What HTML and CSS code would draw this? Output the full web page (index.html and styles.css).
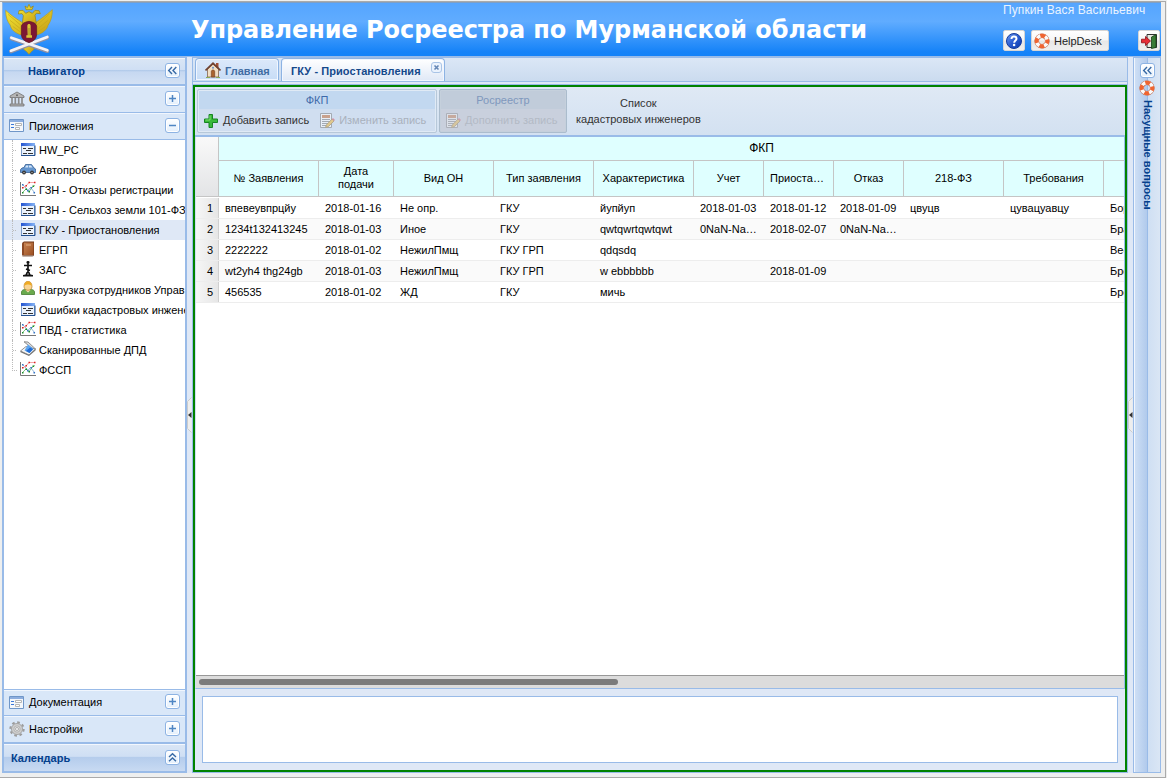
FILE: index.html
```html
<!DOCTYPE html>
<html lang="ru">
<head>
<meta charset="utf-8">
<title>Управление Росреестра по Мурманской области</title>
<link rel="stylesheet" href="styles.css">
</head>
<body>
<svg class="defs" width="0" height="0">
  <defs>
    <linearGradient id="gBlue" x1="0" y1="0" x2="1" y2="1"><stop offset="0" stop-color="#6f9cf0"/><stop offset=".5" stop-color="#2a5cd0"/><stop offset="1" stop-color="#0a37a8"/></linearGradient>
    <linearGradient id="gBar" x1="0" y1="0" x2="1" y2="0"><stop offset="0" stop-color="#2253d0"/><stop offset="1" stop-color="#86b4f5"/></linearGradient>
    <linearGradient id="gGold" x1="0" y1="0" x2="1" y2="1"><stop offset="0" stop-color="#f5e936"/><stop offset="1" stop-color="#c49a12"/></linearGradient>
    <linearGradient id="gBrown" x1="0" y1="0" x2="1" y2="1"><stop offset="0" stop-color="#c98350"/><stop offset="1" stop-color="#9a4e22"/></linearGradient>
  </defs>
  <symbol id="form" viewBox="0 0 16 16"><path d="M1.500 2.500h13v12h-13z" fill="#eaf2fc" stroke="#7d9cc8"/><path d="M1 2h14v3H1z" fill="url(#gBar)"/><path d="M1 14.500h14v-10" fill="none" stroke="#24508f"/><path d="M3 7.500h3M8 7.500h5M6 9.500h5M3 12.500h4M8 12.500h5" stroke="#333"/></symbol>
  <symbol id="formwide" viewBox="0 0 16 16"><path d="M.5 1.500h14v12H.5z" fill="#f4f7fb" stroke="#6f96c8"/><path d="M1 2h13v2H1z" fill="#8eaede"/><path d="M2 6.500h3M2 9.500h3" stroke="#3b78d8"/><path d="M6.500 5.500h6v2h-6zM6.500 9.500h4v2h-4z" fill="#fff" stroke="#b5b5b5"/></symbol>
  <symbol id="bank" viewBox="0 0 16 16"><path d="M8 1 1 5v1.500h14V5zM1 13h14v2H1z" fill="#b5b5b5" stroke="#707070" stroke-width=".8"/><path d="M3 7v6M6.300 7v6M9.700 7v6M13 7v6" stroke="#8b8b8b" stroke-width="1.700"/><circle cx="8" cy="4.300" r="1" fill="#666"/></symbol>
  <symbol id="gear" viewBox="0 0 16 16"><circle cx="8" cy="8" r="6.600" fill="none" stroke="#9c9c9c" stroke-width="2.200" stroke-dasharray="2.600 2.580"/><circle cx="8" cy="8" r="5.500" fill="#cfcfcf" stroke="#a4a4a4"/><circle cx="8" cy="8" r="3.200" fill="#ddd" stroke="#b4b4b4"/><circle cx="8" cy="8" r="1.500" fill="#f7f7f7" stroke="#888" stroke-width=".6"/></symbol>
  <symbol id="car" viewBox="0 0 16 16"><path d="M.5 8.500 2 7l2-.5L5.500 3.500h6L14 7l1.500 1v3.500H.5z" fill="#6596cf" stroke="#365f94" stroke-width=".8"/><path d="m5 6.500 1.200-2h2v2zM9 4.500h2l1.500 2H9z" fill="#d5e6f8"/><circle cx="4" cy="11.500" r="1.900" fill="#333"/><circle cx="12" cy="11.500" r="1.900" fill="#333"/><circle cx="4" cy="11.500" r=".7" fill="#bbb"/><circle cx="12" cy="11.500" r=".7" fill="#bbb"/></symbol>
  <symbol id="chart" viewBox="0 0 16 16"><path d="M.5 1v13.500H16" fill="none" stroke="#777"/><path d="M2.500 3.500 5 6l3 3.500 2.500-3L15 12" fill="none" stroke="#8db4dc"/><path d="M2.500 11.500 6 8l3 2.500 4-5 2-1" fill="none" stroke="#7cc47c"/><path d="M2.500 7 6 5l3-3.500h6" fill="none" stroke="#f3a5a5"/><path d="M2 6h1.500v1.500H2zM5.500 4h1.500v1.500H5.500zM8.500.8H10v1.500H8.500zM14 .8h1.500v1.500H14z" fill="#dc2626"/><path d="M2 11h1.500v1.500H2zM5.500 7.500h1.500V9H5.500zM8.500 10H10v1.500H8.500zM12.500 4.500H14V6h-1.500z" fill="#198c29"/><path d="M2 3h1.500v1.500H2zM7 9h1.500v1.500H7zM10.500 6H12v1.500h-1.500zM13.500 11H15v1.500h-1.500z" fill="#3674c4"/></symbol>
  <symbol id="book" viewBox="0 0 16 16"><path d="M2.500 1.500 4 .5h10v14l-1.500 1h-10z" fill="#6e3516"/><path d="M4 1.500h9.500V14H4z" fill="url(#gBrown)"/><path d="M2 2.500 4 1v13.500H2z" fill="#8c4a25"/><path d="M6 4h5" stroke="#e4b083"/><path d="M2 15h11.500" stroke="#ddd" stroke-width=".8"/></symbol>
  <symbol id="cross" viewBox="0 0 16 16"><path d="M8 0v13M6.500 1.300h3M4 4.500h8M6 8l4 1.500" fill="none" stroke="#111" stroke-width="1.700"/><path d="M3 15.500h10v-1.500l-2.500-.5L9.500 11h-3L5.500 13.500 3 14z" fill="#111"/><path d="M7 12.500h2v1H7z" fill="#aaa"/></symbol>
  <symbol id="user" viewBox="0 0 16 16"><path d="M1.500 11c0-2 3-3 6.500-3s6.500 1 6.500 3v2.500h-13z" fill="#6aaa4d" stroke="#467c32" stroke-width=".8"/><path d="m5.500 9 2.500 2.500L10.500 9" fill="#f8dfb7"/><path d="M4 5.500c0-7 8-7 8 0C12 10.500 4 10.500 4 5.500" fill="#f9d491" stroke="#b77a24" stroke-width=".7"/><path d="M4.200 5c0-6 7.600-6 7.600 0-2-2-5.600-2-7.600 0" fill="#f0ab23"/></symbol>
  <symbol id="scan" viewBox="0 0 16 16"><path d="M4 .8 8 1l7.500 7-1.500 1z" fill="#ddd" stroke="#777" stroke-width=".8"/><path d="M.5 10 6 5.500 15.500 8 9 14z" fill="#f4f4f4" stroke="#777" stroke-width=".8"/><path d="M4.500 9.500 8 3.500 13.500 8 9.500 12z" fill="#5da5f0"/><path d="M6 10l4-3.500 3 1.800L9.500 12z" fill="#1f6bd6"/><path d="M.5 10v1.200L9 15v-1.300zM9 15l6.500-5.500V8L9 13.700z" fill="#777"/></symbol>
  <symbol id="home" viewBox="0 0 16 16"><path d="M11 1h2.500v5H11z" fill="#a55034"/><path d="M2.500 7 8 2l5.500 5v8h-11z" fill="#f2dfc4" stroke="#795338" stroke-width=".7"/><path d="M.5 8.500 8 1.300l7.500 7.200" fill="none" stroke="#704231" stroke-width="1.700"/><path d="M6.300 15V9.500c0-2 3.400-2 3.400 0V15z" fill="#aa642f" stroke="#704021" stroke-width=".6"/><circle cx="8" cy="5.700" r="1" fill="#628cc4"/><path d="M1 15.500h4M11 15.500h4" stroke="#8aaa57"/></symbol>
  <symbol id="plus" viewBox="0 0 16 16"><path d="M6 1.500h3.500V6h5v3.500h-5v5H6v-5H1.500V6H6z" fill="#38b93b" stroke="#168423"/><path d="M7 2.500v4.500H2.500" fill="none" stroke="#82e070"/></symbol>
  <symbol id="edit" viewBox="0 0 16 16"><path d="M1.500.5h11v14h-11z" fill="#fff" stroke="#777"/><path d="M3 2h8v3H3z" fill="#c2662c"/><path d="M3 6.500h8M3 8.500h8M3 10.500h6M3 12.500h5" stroke="#777"/><path d="m6.500 14.500.8-2.500L13 6l2 2-5.700 5.700z" fill="#f0b52e" stroke="#8a641f" stroke-width=".8"/><path d="m13 6 1-1 2 2-1 1z" fill="#d74760"/></symbol>
  <symbol id="ring" viewBox="0 0 16 16"><circle cx="8" cy="8" r="5.300" fill="none" stroke="#b75635" stroke-width="4.600"/><circle cx="8" cy="8" r="5.300" fill="none" stroke="#fafafa" stroke-width="3.800"/><circle cx="8" cy="8" r="5.300" fill="none" stroke="#ef6532" stroke-width="4" stroke-dasharray="4.900 3.425" stroke-dashoffset="2.400"/></symbol>
  <symbol id="help" viewBox="0 0 16 16"><circle cx="8" cy="8" r="7.500" fill="url(#gBlue)" stroke="#153b9c"/><path d="M5.500 6c0-3.500 5-3 5-.3 0 1.800-2.300 1.800-2.300 4" fill="none" stroke="#fff" stroke-width="2"/><circle cx="8.100" cy="12" r="1.300" fill="#fff"/></symbol>
  <symbol id="exit" viewBox="0 0 16 16"><path d="M6 1.500h9.500v13H6z" fill="#e9e9df" stroke="#333"/><path d="m10.500 4 4.500-2.500v13l-4.500 1z" fill="#397c36" stroke="#163e16" stroke-width=".8"/><path d="M.5 6.200h4V3.500L9.500 8l-5 4.500V9.800h-4z" fill="#e72d35" stroke="#900d13" stroke-width=".8"/></symbol>
  <symbol id="tPlus" viewBox="0 0 13 13"><path d="M6.500 3v7M3 6.500h7" stroke="#4f86c4" stroke-width="1.500"/></symbol>
  <symbol id="tMinus" viewBox="0 0 13 13"><path d="M3 6.500h7" stroke="#4f86c4" stroke-width="1.500"/></symbol>
  <symbol id="tLeft" viewBox="0 0 13 13"><path d="M6 3 2.700 6.500 6 10M10.300 3 7 6.500l3.300 3.500" fill="none" stroke="#386aa5" stroke-width="1.400"/></symbol>
  <symbol id="tUp" viewBox="0 0 13 13"><path d="m3 6 3.500-3.300L10 6M3 10.300 6.500 7l3.500 3.300" fill="none" stroke="#386aa5" stroke-width="1.400"/></symbol>
</svg>

<div class="window">
  <header class="header">
    <svg class="emblem" viewBox="9 9 156 159">
      <path d="M70 70C52 58 32 46 17 31c0 20 5 34 14 45 2 12 13 22 30 28l14-3zM103 70c18-12 35-24 54-41 0 20-4 34-13 47-3 13-14 22-31 28l-14-3z" fill="url(#gGold)" stroke="#b89c18" stroke-width="2"/>
      <path d="m24 43 39 33M30 61l31 25M38 79l22 16M149 41l-38 34M144 61l-30 25M136 80l-22 15" stroke="#c4a41a" stroke-width="2"/>
      <path d="M78 29 75 18l7 5 5-10 5 10 8-5-4 11zM55 42l2-10 12-1 8 9 10-5 10 5 8-9 12 1 4 9-12-1-4 6 4 24H67l3-23-4-6z" fill="url(#gGold)" stroke="#97800d" stroke-width="2"/>
      <path d="m76 126 11-10 12 10 3 22-7 6-8 9-8-9-8-6z" fill="url(#gGold)" stroke="#b5930d" stroke-width="2"/>
      <path d="m34 115 108 38M142 113 33 154" stroke="#8f91a5" stroke-width="12" stroke-linecap="round"/>
      <path d="m34 113 108 38M142 111 33 152" stroke="#f3f3f7" stroke-width="8" stroke-linecap="round"/>
      <path d="M64 78q3-11 23-14 20 3 23 14v27q-2 17-23 23-21-6-23-23z" fill="#7c1733" stroke="#5f1625" stroke-width="2"/>
      <path d="M82 78c0-8 10-8 10 0v28h4v7H79v-7h4z" fill="#dac638"/><path d="M87 84v22" stroke="#8a6d13" stroke-width="2"/>
    </svg>
    <h1 class="title">Управление Росреестра по Мурманской области</h1>
    <div class="account">
      <div class="username">Пупкин Вася Васильевич</div>
      <div class="buttons">
        <button class="btn btn-icon"><svg><use href="#help"/></svg></button>
        <button class="btn btn-help"><svg><use href="#ring"/></svg><span>HelpDesk</span></button>
        <button class="btn btn-icon btn-exit"><svg><use href="#exit"/></svg></button>
      </div>
    </div>
  </header>

  <div class="body">
    <nav class="nav">
      <div class="nav-head"><span>Навигатор</span><svg class="tool"><use href="#tLeft"/></svg></div>
      <div class="section"><svg class="ico"><use href="#bank"/></svg><span>Основное</span><svg class="tool"><use href="#tPlus"/></svg></div>
      <div class="section open"><svg class="ico"><use href="#formwide"/></svg><span>Приложения</span><svg class="tool"><use href="#tMinus"/></svg></div>
      <ul class="tree">
        <li><svg class="ico"><use href="#form"/></svg>HW_PC</li>
        <li><svg class="ico"><use href="#car"/></svg>Автопробег</li>
        <li><svg class="ico"><use href="#chart"/></svg>ГЗН - Отказы регистрации</li>
        <li><svg class="ico"><use href="#form"/></svg>ГЗН - Сельхоз земли 101-ФЗ</li>
        <li class="selected"><svg class="ico"><use href="#form"/></svg>ГКУ - Приостановления</li>
        <li><svg class="ico"><use href="#book"/></svg>ЕГРП</li>
        <li><svg class="ico"><use href="#cross"/></svg>ЗАГС</li>
        <li><svg class="ico"><use href="#user"/></svg>Нагрузка сотрудников Управ</li>
        <li><svg class="ico"><use href="#form"/></svg>Ошибки кадастровых инжене</li>
        <li><svg class="ico"><use href="#chart"/></svg>ПВД - статистика</li>
        <li><svg class="ico"><use href="#scan"/></svg>Сканированные ДПД</li>
        <li><svg class="ico"><use href="#chart"/></svg>ФССП</li>
      </ul>
      <div class="section docs"><svg class="ico"><use href="#formwide"/></svg><span>Документация</span><svg class="tool"><use href="#tPlus"/></svg></div>
      <div class="section settings"><svg class="ico"><use href="#gear"/></svg><span>Настройки</span><svg class="tool"><use href="#tPlus"/></svg></div>
      <div class="calendar"><span>Календарь</span><svg class="tool"><use href="#tUp"/></svg></div>
    </nav>

    <div class="splitter"><svg viewBox="0 0 5 36"><path d="M4.500.5.500 4.500v27l4 4" fill="#eee" stroke="#ccc"/><path d="M4.500 15v6L1 18z" fill="#333"/></svg></div>

    <main class="center">
      <div class="tabs">
        <div class="tab"><svg class="ico"><use href="#home"/></svg>Главная</div>
        <div class="tab active">ГКУ - Приостановления<svg class="close" viewBox="0 0 11 11"><rect x=".5" y=".5" width="10" height="10" rx="2.500" fill="#eaf2fd" stroke="#a9c4e6"/><path d="m3.500 3.500 4 4m0-4-4 4" stroke="#6587b5" stroke-width="1.600"/></svg></div>
      </div>
      <div class="panel">
        <div class="toolbar">
          <div class="group fkp">
            <div class="group-title">ФКП</div>
            <div class="group-body"><span class="action"><svg class="ico"><use href="#plus"/></svg>Добавить запись</span><span class="action off"><svg class="ico"><use href="#edit"/></svg>Изменить запись</span></div>
          </div>
          <div class="group rosreestr">
            <div class="group-title">Росреестр</div>
            <div class="group-body"><span class="action off"><svg class="ico"><use href="#edit"/></svg>Дополнить запись</span></div>
          </div>
          <div class="list-btn">Список<br>кадастровых инженеров</div>
        </div>
        <div class="grid">
          <div class="grid-head">
            <div class="corner"></div>
            <div class="head-cols">
              <div class="head-group">ФКП</div>
              <div class="cols heads"><div>№ Заявления</div><div class="two">Дата<br>подачи</div><div>Вид ОН</div><div>Тип заявления</div><div>Характеристика</div><div>Учет</div><div class="cut">Приоста…</div><div>Отказ</div><div>218-ФЗ</div><div>Требования</div><div></div></div>
            </div>
          </div>
          <div class="row"><b>1</b><div class="cols"><div>впевеувпрцйу</div><div>2018-01-16</div><div>Не опр.</div><div>ГКУ</div><div>йупйуп</div><div>2018-01-03</div><div>2018-01-12</div><div>2018-01-09</div><div>цвуцв</div><div>цувацуавцу</div><div>Бор</div></div></div>
          <div class="row alt"><b>2</b><div class="cols"><div>1234t132413245</div><div>2018-01-03</div><div>Иное</div><div>ГКУ</div><div>qwtqwrtqwtqwt</div><div>0NaN-Na…</div><div>2018-02-07</div><div>0NaN-Na…</div><div></div><div></div><div>Бра</div></div></div>
          <div class="row"><b>3</b><div class="cols"><div>2222222</div><div>2018-01-02</div><div>НежилПмщ</div><div>ГКУ ГРП</div><div>qdqsdq</div><div></div><div></div><div></div><div></div><div></div><div>Вес</div></div></div>
          <div class="row alt"><b>4</b><div class="cols"><div>wt2yh4 thg24gb</div><div>2018-01-03</div><div>НежилПмщ</div><div>ГКУ ГРП</div><div>w ebbbbbb</div><div></div><div>2018-01-09</div><div></div><div></div><div></div><div>Бро</div></div></div>
          <div class="row"><b>5</b><div class="cols"><div>456535</div><div>2018-01-02</div><div>ЖД</div><div>ГКУ</div><div>мичь</div><div></div><div></div><div></div><div></div><div></div><div>Бро</div></div></div>
          <div class="hscroll"><div class="thumb"></div></div>
        </div>
        <div class="note"></div>
      </div>
    </main>

    <div class="splitter"><svg viewBox="0 0 5 36"><path d="M4.500.5.500 4.500v27l4 4" fill="#eee" stroke="#ccc"/><path d="M4.500 15v6L1 18z" fill="#333"/></svg></div>

    <aside class="east"><svg class="tool"><use href="#tLeft"/></svg><svg class="ico"><use href="#ring"/></svg><span>Насущные вопросы</span></aside>
  </div>
</div>
</body>
</html>
```
FILE: styles.css
```css
*, *::before { box-sizing: border-box; }
body { margin: 0; width: 1167px; height: 778px; overflow: hidden; background: #eeefef; font: 11px/13px "Liberation Sans", Arial, sans-serif; color: #000; padding-top: 1px; }
svg { display: block; flex: none; }
.defs { position: absolute; }
.ico { width: 16px; height: 16px; }
.tool { width: 15px; height: 15px; border: 1px solid #8db3e3; border-radius: 3px; background: linear-gradient(#fff, #e3effc); box-shadow: inset 0 0 0 1px #fff; }

.window { width: 1166px; height: 777px; padding: 0 4px 4px 2px; border-top: 1px solid #aaa; border-right: 1px solid #aaa; border-bottom: 1px solid #aaa; display: flex; flex-direction: column; }
.header { height: 54px; flex: none; display: flex; border-top: 1px solid #7f9fc4; border-left: 1px solid #8ab6e8; background: linear-gradient(#55a5ff 0, #60acff 35%, #1683f8 92%, #1482f8 100%); }
.emblem { width: 52px; height: 53px; }
.title { margin: 0 0 0 136px; width: 812px; font: bold 24px/54px "DejaVu Sans", sans-serif; letter-spacing: -.05px; color: #fff; white-space: nowrap; }
.account { flex: none; width: 157px; }
.username { font-size: 12px; line-height: 14px; color: #e9f3ff; white-space: nowrap; letter-spacing: .1px; }
.buttons { display: flex; margin-top: 13px; }
.btn { display: flex; align-items: center; height: 21px; padding: 0 2px; border: 1px solid #d5d5d5; border-radius: 2px; background: linear-gradient(#fff, #f6f6f6 48%, #e7e7e7 52%, #efefef); font: 11px/19px "Liberation Sans", sans-serif; color: #222; gap: 4px; }
.btn span { padding-top: 2px; }
.btn svg { width: 16px; height: 16px; }
.btn-icon { width: 22px; }
.btn-help { width: 78px; margin-left: 6px; }
.btn-exit { margin-left: 29px; }

.body { flex: 1; min-height: 0; display: flex; background: #dfe8f6; border-top: 1px solid #99bbe8; }
.nav { width: 185px; flex: none; border: 2px solid #99bbe8; border-top: 1px solid #99bbe8; display: flex; flex-direction: column; overflow: hidden; background: #fff; }
.nav-head { height: 28px; flex: none; display: flex; align-items: center; justify-content: space-between; padding: 0 5px 0 24px; border-bottom: 2px solid #99bbe8; background: linear-gradient(#dae6f5 0, #cfdff4 46%, #b0c9e9 47%, #c6d8f1 54%, #d3e1f4 100%); color: #04408c; font-weight: bold; box-shadow: inset 0 1px #f0f5fc; }
.nav-head span { padding-top: 1px; }
.nav-head .tool { margin-bottom: 1px; }
.section { flex: none; height: 27px; display: flex; align-items: center; padding: 0 5px; border-bottom: 1px solid #99bbe8; background: #d9e7f8; box-shadow: inset 0 1px #f1f6fd; }
.section .ico { margin-right: 4px; }
.section .tool { margin: 0 0 2px auto; }
.tree { list-style: none; margin: 0; padding: 0; flex: 1; overflow: hidden; }
.tree li { display: flex; height: 20px; line-height: 20px; white-space: nowrap; padding-left: 8px; gap: 3px; }
.tree li::before { content: ""; flex: none; width: 5px; height: 11px; border-left: 1px dotted #bbb; border-bottom: 1px dotted #bbb; }
.tree li:not(:last-child)::before { height: 20px; border-bottom: 0; background: repeating-linear-gradient(90deg, #bbb 0 1px, transparent 1px 2px) 0 10px / 5px 1px no-repeat; }
.tree li .ico { margin-top: 1px; }
.tree .selected { background: #dfe8f6; }
.docs { border-top: 1px solid #99bbe8; }
.settings { height: 28px; border-bottom-width: 2px; }
.calendar { height: 27px; flex: none; display: flex; align-items: center; justify-content: space-between; padding: 0 5px 0 7px; background: linear-gradient(#dae6f5 0, #cfdff4 46%, #b4ccec 48%, #c8daf2 100%); box-shadow: inset 0 1px #f3f7fd; color: #04408c; font-weight: bold; }
.calendar span { padding-top: 2px; }

.splitter { width: 5px; flex: none; background: #dfe8f6; display: flex; align-items: center; }
.splitter svg { width: 5px; height: 36px; }

.center { width: 936px; flex: none; border: 1px solid #99bbe8; display: flex; flex-direction: column; }
.tabs { height: 27px; flex: none; display: flex; align-items: flex-end; gap: 2px; padding: 0 2px 3px; border-bottom: 1px solid #99bbe8; background: linear-gradient(#dbe7f6, #cbdbef 23px, #99bbe8 23px, #99bbe8 24px, #dfe8f6 24px); }
.tab { height: 22px; display: flex; align-items: center; gap: 4px; width: 84px; padding: 3px 9px 0; border: 1px solid #8db3e3; border-bottom: 0; border-radius: 4px 4px 0 0; background: linear-gradient(#dce9fa, #c7dcf6); color: #416da3; font-weight: bold; box-shadow: inset 0 0 0 1px #f0f6ff; white-space: nowrap; margin-bottom: 1px; }
.tab .ico { margin-top: -2px; }
.tab.active { width: 164px; height: 23px; margin-bottom: 0; padding-top: 3px; letter-spacing: .07px; color: #15498b; background: linear-gradient(#fff, #dfe8f6); position: relative; }
.close { position: absolute; width: 11px; height: 11px; right: 2px; top: 3px; }
.panel { flex: 1; min-height: 0; border: 2px solid #008200; display: flex; flex-direction: column; }
.toolbar { height: 50px; flex: none; display: flex; align-items: flex-start; gap: 2px; padding: 2px; border-bottom: 2px solid #99bbe8; background: linear-gradient(#dfe9f5, #d3e1f1); color: #333; }
.group { height: 44px; padding: 1px; border: 1px solid #b7c8d9; border-radius: 2px; background: #d0def0; box-shadow: inset 0 0 0 1px #e0eaf5; }
.fkp { width: 240px; }
.rosreestr { width: 128px; background: #c9d0dd; box-shadow: inset 0 0 0 1px #c5d0dc; border-color: #abbccd; }
.group-title { height: 18px; line-height: 19px; text-align: center; background: #c2d8f0; color: #3e6aaa; }
.rosreestr .group-title { background: #c1ccda; color: #7f98bd; }
.group-body { display: flex; height: 23px; gap: 10px; padding: 0 4px; }
.action { display: flex; align-items: center; gap: 4px; white-space: nowrap; }
.off { color: #a9b1bd; }
.off .ico { opacity: .5; }
.rosreestr .off { color: #b3bac5; }
.rosreestr .off .ico { opacity: .35; }
.list-btn { line-height: 16px; text-align: center; padding: 6px 0 0 7px; }

.grid { height: 552px; flex: none; display: flex; flex-direction: column; border-left: 1px solid #d0dff2; border-right: 1px solid #99bbe8; border-bottom: 1px solid #99bbe8; background: #fff; overflow: hidden; }
.grid-head { height: 60px; flex: none; display: flex; border-bottom: 1px solid #c5c5c5; margin-bottom: 1px; }
.corner { width: 23px; flex: none; border-right: 1px solid #c5c5c5; background: linear-gradient(#f9f9f9, #e3e4e6); }
.head-cols { width: 1085px; flex: none; background: #dfffff; }
.head-group { height: 24px; line-height: 22px; font-size: 12px; text-align: center; border-bottom: 1px solid #c5c5c5; }
.cols { display: grid; grid-template-columns: 100px 75px 100px 100px 100px 70px 70px 70px 100px 100px 200px; flex: none; }
.heads { height: 35px; }
.heads > div { display: flex; align-items: center; justify-content: center; text-align: center; border-right: 1px solid #c5c5c5; min-width: 0; }
.heads .two { padding-bottom: 1px; }
.heads .cut { padding-right: 3px; }
.row { height: 21px; flex: none; display: flex; line-height: 21px; border-bottom: 1px solid #ededed; }
.row b { width: 23px; flex: none; font-weight: normal; text-align: right; padding-right: 5px; border-right: 1px solid #d0d0d0; background: linear-gradient(90deg, #f6f6f6, #e6e6e6); }
.row .cols > div { padding: 0 6px; white-space: nowrap; }
.alt { background: #fafafa; }
.hscroll { margin-top: auto; height: 13px; flex: none; border-top: 1px solid #989898; padding: 3px; background: #dcdcdc; }
.thumb { width: 419px; height: 6px; border-radius: 3px; background: #7b7b7b; }
.note { margin: 7px; width: 916px; height: 67px; flex: none; border: 1px solid #99bbe8; background: #fff; }

.east { width: 28px; flex: none; border: 1px solid #99bbe8; display: flex; flex-direction: column; align-items: center; gap: 2px; padding-top: 5px; color: #04408c; font-weight: bold; background: linear-gradient(90deg, #f1f6fd 0 1px, #cedff5 1px, #b1caec 13px, #99bbe8 13px 14px, #cfdff3 14px, #dae6f5 100%); }
.east span { writing-mode: vertical-rl; margin-top: 2px; }
```
